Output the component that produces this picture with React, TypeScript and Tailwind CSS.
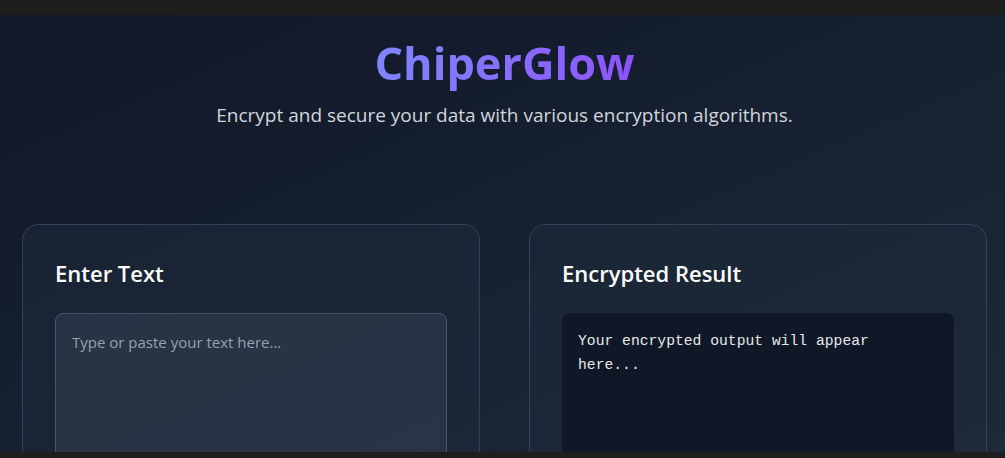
import React, { useState } from 'react';

const App: React.FC = () => {
  const [text, setText] = useState('');

  return (
    <div className="h-screen flex flex-col bg-[#1e1e1e] overflow-hidden" style={{ fontFamily: '"Open Sans", "Noto Sans", sans-serif' }}>
      <div className="h-[15px] shrink-0 bg-[#1e1e1e]" />
      <main className="flex-1 overflow-hidden bg-gradient-to-br from-gray-900 to-gray-800 pl-[22px] pr-[18px]">
        <header className="text-center pt-6 mb-[95px]">
          <h1 className="text-[45px] leading-[48px] font-bold mb-[14px]">
            <span className="bg-gradient-to-r from-indigo-400 to-violet-500 bg-clip-text text-transparent">ChiperGlow</span>
          </h1>
          <p className="text-[19px] leading-7 text-gray-300">Encrypt and secure your data with various encryption algorithms.</p>
        </header>

        <div className="grid grid-cols-2 gap-[49px]">
          <section className="rounded-2xl border border-gray-700 bg-gray-800/50 p-8">
            <h2 className="text-[22px] leading-8 font-semibold text-white mb-6">Enter Text</h2>
            <textarea
              value={text}
              onChange={(e) => setText(e.target.value)}
              placeholder="Type or paste your text here..."
              className="w-full h-64 resize-none rounded-lg border border-gray-600 bg-gray-700/50 p-4 text-[15px] leading-6 text-white placeholder-gray-400 outline-none"
            />
          </section>

          <section className="rounded-2xl border border-gray-700 bg-gray-800/50 p-8">
            <h2 className="text-[22px] leading-8 font-semibold text-white mb-6">Encrypted Result</h2>
            <div className="h-64 rounded-lg bg-gray-900 p-4 text-gray-200 text-[14.7px] leading-6" style={{ fontFamily: '"Liberation Mono", monospace' }}>
              {text || 'Your encrypted output will appear here...'}
            </div>
          </section>
        </div>
      </main>
      <div className="h-[6px] shrink-0 bg-[#1e1e1e]" />
    </div>
  );
};

export default App;
